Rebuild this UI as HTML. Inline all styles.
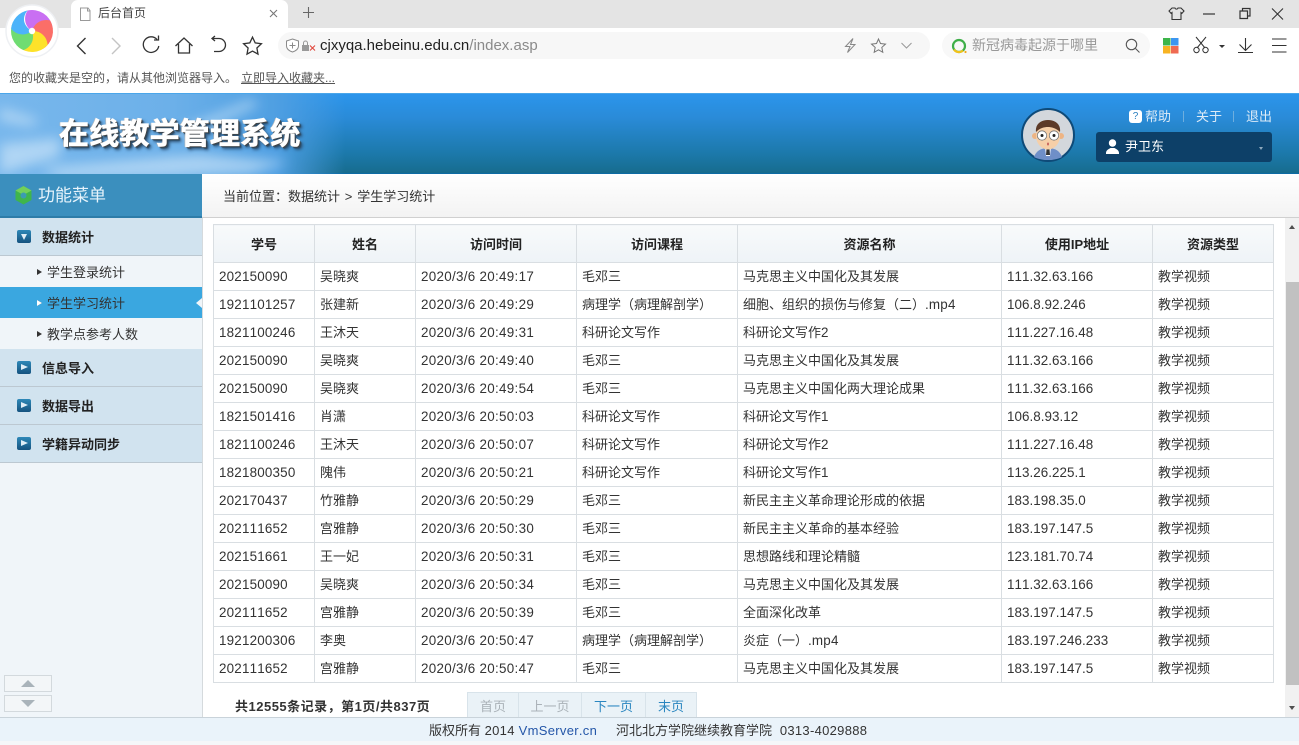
<!DOCTYPE html>
<html lang="zh"><head><meta charset="utf-8"><title>后台首页</title>
<style>
*{box-sizing:border-box;margin:0;padding:0}
html,body{width:1299px;height:745px;overflow:hidden;background:#fff}
body{position:relative;font-family:"Liberation Sans","Noto Sans CJK SC",sans-serif;font-size:13px;color:#333;font-kerning:none}
.a{position:absolute;white-space:nowrap}
svg{position:absolute;overflow:visible}
.i{fill:none;stroke:#333;stroke-width:1.3}
table{position:absolute;left:213px;top:224px;width:1060px;border-collapse:collapse;table-layout:fixed}
th,td{border:1px solid #d9dee2;white-space:nowrap;overflow:hidden}
th{height:38px;font-size:13px;font-weight:bold;color:#222;background:linear-gradient(#f8fafb,#eef3f7)}
td{height:28px;padding:0 0 0 5px;font-size:13px;color:#333;line-height:27px}
td i{font-style:normal;font-size:13.4px;letter-spacing:.2px}
td:nth-child(3) i{letter-spacing:.3px;word-spacing:0}
td:nth-child(6) i{letter-spacing:.05px}
.m1{left:0;width:202px;height:38px;background:#d1e3ef;border-bottom:1px solid #bcc8d1;font-weight:bold;font-size:13px;color:#222;line-height:39px;padding-left:42px}
.m1 b{position:absolute;left:17px;top:12px;width:14px;height:13px;border-radius:2px;background:linear-gradient(#2e88b8,#15537f)}
.m1 b:after{content:"";position:absolute;left:4px;top:3px;border-left:7px solid #dfeef7;border-top:3.5px solid transparent;border-bottom:3.5px solid transparent}
.m1 b.d:after{left:3.5px;top:4px;border-left:3.5px solid transparent;border-right:3.5px solid transparent;border-top:6px solid #dfeef7;border-bottom:0}
.m2{left:0;width:202px;height:31px;line-height:33px;padding-left:47px;font-size:13px;color:#333;background:#f0f5f9}
.m2:before{content:"";position:absolute;left:37px;top:13px;border-left:5px solid #333;border-top:3.5px solid transparent;border-bottom:3.5px solid transparent}
.pg{top:692px;height:25px;background:#eaf2f7;border:1px solid #d8e3ea;border-bottom:0;text-align:center;line-height:28px;font-size:13px}
.l{letter-spacing:.3px}
</style></head><body>

<!-- browser chrome -->
<div class="a" style="left:0;top:0;width:1299px;height:28px;background:#e4e4e4"></div>
<div class="a" style="left:71px;top:0;width:217px;height:28px;background:#fff;border-radius:7px 7px 0 0"></div>
<svg style="left:0;top:0" width="70" height="64" viewBox="0 0 70 64">
<circle cx="32" cy="31" r="26" fill="#fff" stroke="#eef0f3" stroke-width="1.5"/>
<g transform="translate(32 31)">
<path transform="rotate(-12)" d="M0 0C-6-6-6-15 0-21A21 21 0 0 1 21 0C12-6 5-5 0 0Z" fill="#c96ff2"/>
<path transform="rotate(60)" d="M0 0C-6-6-6-15 0-21A21 21 0 0 1 21 0C12-6 5-5 0 0Z" fill="#fb6e68"/>
<path transform="rotate(132)" d="M0 0C-6-6-6-15 0-21A21 21 0 0 1 21 0C12-6 5-5 0 0Z" fill="#fde22a"/>
<path transform="rotate(204)" d="M0 0C-6-6-6-15 0-21A21 21 0 0 1 21 0C12-6 5-5 0 0Z" fill="#6fdc72"/>
<path transform="rotate(276)" d="M0 0C-6-6-6-15 0-21A21 21 0 0 1 20-6.500C12-12 4-9 0 0Z" fill="#4cb3fa"/>
<circle r="3.200" fill="#fff"/>
</g>
</svg>
<svg style="left:79px;top:7px" width="12" height="14" viewBox="0 0 12 14"><path d="M1.500 1h7.500l2 2.500V13.500H1.500Z M8.500 1v3h2.500" fill="none" stroke="#999" stroke-width="1"/></svg>
<div class="a" style="left:98px;top:5px;font-size:12px;color:#444;line-height:17px">后台首页</div>
<svg style="left:269px;top:9px" width="9" height="9"><path d="M1 1l7 7M8 1l-7 7" stroke="#777" stroke-width="1.100" fill="none"/></svg>
<svg style="left:302px;top:6px" width="13" height="13"><path d="M6.500 1v11M1 6.500h11" stroke="#666" stroke-width="1.100" fill="none"/></svg>

<svg style="left:0;top:0;pointer-events:none" width="1299" height="62">
<g class="i">
<path d="M85.500 38l-8 8 8 8" stroke-width="1.400"/>
<path d="M112 38l8 8-8 8" stroke="#c4c4c4" stroke-width="1.400"/>
<path d="M157 39.500a7.800 7.800 0 1 0 1.800 6.500"/><path d="M154 40l4.500 0V35.500"/>
<path d="M175.500 46L184 38l8.500 8M178.500 44v9h11v-9"/>
<path d="M215 36l-3 2.500 3 2.500M212 38.500h7a6.500 6.500 0 0 1 0 13h-5"/>
<path d="M252.500 37.200l2.700 5.700 6.200.8-4.500 4.300 1.100 6.100-5.500-3-5.500 3 1.100-6.100-4.500-4.300 6.200-.8z"/>
</g>
</svg>

<div class="a" style="left:278px;top:32px;width:652px;height:27px;border-radius:13.500px;background:#f7f7f7"></div>
<svg style="left:285px;top:38px" width="34" height="15">
<path d="M7.500 1l6 2v5c0 3-3 5-6 6-3-1-6-3-6-6V3z" fill="#fff" stroke="#8a8a8a" stroke-width="1"/><path d="M7.500 4.500v6M4.500 7.500h6" stroke="#8a8a8a"/>
<rect x="17" y="7" width="7" height="6" fill="#999"/><path d="M18.500 7V5a2 2 0 0 1 4 0v2" fill="none" stroke="#999"/>
<path d="M25 7.500l5 5M30 7.500l-5 5" stroke="#e0483e" stroke-width="1.100"/></svg>
<div class="a" style="left:320px;top:36px;font-size:15px;line-height:19px;color:#222">cjxyqa.hebeinu.edu.cn<span style="color:#8a8a8a">/index.asp</span></div>
<svg style="left:842px;top:37px" width="75" height="18" class="i">
<path d="M11 1.500L3.500 9.500H8L5.500 15.500L13 7.500H8.500Z" stroke="#888" stroke-width="1" fill="none"/>
<path d="M36.500 2l2 4.500 5 .6-3.700 3.300 1 4.900-4.300-2.500-4.300 2.500 1-4.900-3.700-3.300 5-.6z" stroke="#777" fill="none" stroke-width="1"/>
<path d="M59.500 6l5 5 5-5" stroke="#999" fill="none" stroke-width="1"/></svg>

<div class="a" style="left:942px;top:32px;width:208px;height:27px;border-radius:13.500px;background:#f8f8f8"></div>
<svg style="left:951px;top:38px" width="17" height="16"><circle cx="8" cy="8" r="6" fill="none" stroke="#3fae49" stroke-width="2.200"/><path d="M3 11.500A6 6 0 0 0 12 12.500" fill="none" stroke="#f1c21a" stroke-width="2.200"/><circle cx="14.500" cy="14" r="1.100" fill="#f1a91a"/></svg>
<div class="a" style="left:972px;top:36px;font-size:14px;line-height:19px;color:#999">新冠病毒起源于哪里</div>
<svg style="left:1125px;top:38px" width="16" height="16"><circle cx="6.500" cy="6.500" r="5.200" fill="none" stroke="#555" stroke-width="1.100"/><path d="M10.500 10.500l4 4" stroke="#555" stroke-width="1.100"/></svg>
<svg style="left:1163px;top:38px" width="16" height="16"><rect width="7.500" height="7.500" fill="#3cb54a"/><rect x="8" width="7.500" height="7.500" fill="#3c96f0"/><rect y="8" width="7.500" height="7.500" fill="#f7b322"/><rect x="8" y="8" width="7.500" height="7.500" fill="#ef6a52"/></svg>
<svg style="left:1193px;top:36px" width="36" height="18" class="i"><path d="M3 1l9 11M13 1L4 12" stroke="#333" stroke-width="1" fill="none"/><circle cx="3.500" cy="14" r="2.700" stroke="#333" stroke-width="1" fill="none"/><circle cx="12.500" cy="14" r="2.700" stroke="#333" stroke-width="1" fill="none"/><path d="M26 9h6l-3 3z" fill="#333" stroke="none"/></svg>
<svg style="left:1237px;top:37px" width="17" height="17"><path d="M8.500 1v12M2.500 7.500l6 6 6-6M1 15.500h15" fill="none" stroke="#333" stroke-width="1.100"/></svg>
<svg style="left:1272px;top:38px" width="15" height="15"><path d="M0 1h14.500M0 7.500h14.500M0 14h14.500" stroke="#333" stroke-width="1.100"/></svg>

<svg style="left:1168px;top:6px" width="122" height="16">
<path d="M4 2l3 0c.5 1.500 2.500 1.500 3 0h3l3 3-2 2.300-1-.8V13.500H4V6.500l-1 .8-2-2.300z" fill="none" stroke="#333" stroke-width="1.100"/>
<path d="M35 8h12" stroke="#333" stroke-width="1.200"/>
<path d="M72 5h7.500v7.500H72zM74.500 5V2.500h7.500V10h-2.500" fill="none" stroke="#333" stroke-width="1.200"/>
<path d="M104 2.500l11 11M115 2.500l-11 11" stroke="#333" stroke-width="1.100"/></svg>

<div class="a" style="left:9px;top:70px;font-size:12px;line-height:16px;color:#555">您的收藏夹是空的，请从其他浏览器导入。</div>
<div class="a" style="left:241px;top:70px;font-size:12px;line-height:16px;color:#555;text-decoration:underline">立即导入收藏夹...</div>

<!-- app header -->
<div class="a" style="left:0;top:93px;width:1299px;height:81px;background:linear-gradient(#2b95ec 0%,#2a8bd8 30%,#1c79ab 75%,#176c8e 100%);border-top:1px solid #4aa6ea;border-bottom:1px solid #0d6ba4"></div>
<div class="a" style="left:0;top:94px;width:345px;height:80px;background:linear-gradient(90deg,#78b7ec 0%,#6cb0e9 50%,#4f9fe2 80%,rgba(43,140,218,0) 100%)"></div>
<svg style="left:0;top:94px;width:340px;height:80px;overflow:hidden" width="340" height="80"><defs><filter id="b" x="-30%" y="-30%" width="160%" height="160%"><feGaussianBlur stdDeviation="6"/></filter></defs><g filter="url(#b)" fill="#d6eafa" opacity=".6"><path d="M0 14L40 26 30 32 0 26Z"/><path d="M170 40L250 6 260 10 190 42Z"/><path d="M0 50L60 44 60 62 0 80Z"/><path d="M40 74L200 60 290 68 250 80 60 84Z"/></g></svg>
<div class="a" style="left:59px;top:115px;font-size:30px;line-height:40px;font-weight:bold;letter-spacing:.2px;color:#fff;-webkit-text-stroke:.6px #fff;text-shadow:1px 1px 0 #444,2px 2px 1px #2c4a63,3px 3px 3px #29496a,-1px 0 0 #bbb">在线教学管理系统</div>

<svg style="left:1021px;top:108px" width="54" height="54" viewBox="0 0 54 54">
<circle cx="27" cy="27" r="26" fill="#d3d7dc" stroke="#0e4a78" stroke-width="2"/>
<path d="M13 49c2-6 7-9 14-9s12 3 14 9c-8 4-20 4-28 0z" fill="#6f8fc8"/>
<path d="M24 39h6l-1 9h-4z" fill="#fff"/><path d="M25.500 41h3l.5 6h-4z" fill="#333"/>
<circle cx="14" cy="28" r="3" fill="#eeb483"/><circle cx="40" cy="28" r="3" fill="#eeb483"/>
<ellipse cx="27" cy="28" rx="12" ry="13.500" fill="#f6cfa8"/>
<path d="M15 24c-1-8 5-12 12-12 7 0 13 4 12 12-4-4-9-5-12-5-4 0-8 1-12 5z" fill="#5d3a28"/>
<circle cx="21" cy="27.500" r="4.700" fill="#fff" stroke="#777" stroke-width=".8"/><circle cx="33" cy="27.500" r="4.700" fill="#fff" stroke="#777" stroke-width=".8"/>
<circle cx="21" cy="27.500" r="1.500" fill="#222"/><circle cx="33" cy="27.500" r="1.500" fill="#222"/>
<ellipse cx="27" cy="36" rx="1" ry="1.500" fill="#c9655e"/>
</svg>

<div class="a" style="left:1129px;top:110px;width:13px;height:13px;border-radius:3px;background:#fff;color:#2a80c0;font-size:10px;line-height:13px;text-align:center">?</div>
<div class="a" style="left:1145px;top:109px;font-size:13px;line-height:16px;color:#dcebf7">帮助</div>
<div class="a" style="left:1183px;top:111px;width:1px;height:11px;background:#6eaede"></div>
<div class="a" style="left:1196px;top:109px;font-size:13px;line-height:16px;color:#dcebf7">关于</div>
<div class="a" style="left:1233px;top:111px;width:1px;height:11px;background:#6eaede"></div>
<div class="a" style="left:1246px;top:109px;font-size:13px;line-height:16px;color:#dcebf7">退出</div>
<div class="a" style="left:1096px;top:132px;width:176px;height:30px;border-radius:3px;background:#0d4068"></div>
<svg style="left:1106px;top:139px" width="13" height="15"><circle cx="6.500" cy="4" r="3.700" fill="#fff"/><path d="M0 14c0-3 3-4 4.500-5h4c1.500 1 4.500 2 4.500 5v1H0z" fill="#fff"/></svg>
<div class="a" style="left:1125px;top:138px;font-size:13px;line-height:18px;color:#fff">尹卫东</div>
<div class="a" style="left:1259px;top:147px;border-top:3px solid #8fa9bd;border-left:2.500px solid transparent;border-right:2.500px solid transparent"></div>

<!-- breadcrumb -->
<div class="a" style="left:202px;top:174px;width:1097px;height:44px;background:linear-gradient(#fff,#f3f3f3);border-bottom:1px solid #d0d0d0"></div>
<div class="a" style="left:223px;top:188px;font-size:13px;line-height:18px;color:#333;word-spacing:1.200px">当前位置：数据统计 &gt; 学生学习统计</div>

<!-- sidebar -->
<div class="a" style="left:0;top:174px;width:202px;height:543px;background:#f0f5f9"></div>
<div class="a" style="left:0;top:174px;width:202px;height:44px;background:#3b8fbe;border-bottom:2px solid #2d7ca8"></div>
<svg style="left:15px;top:186px" width="18" height="19"><path d="M8.500 0l8 4.500v9.500l-8 4.500-8-4.500V4.500z" fill="#3fb54c"/><path d="M8.500 0l8 4.500-8 4.500-8-4.500z" fill="#72d05a"/><circle cx="8.500" cy="9.500" r="3" fill="#3b9cb0"/></svg>
<div class="a" style="left:38px;top:184px;font-size:17px;line-height:23px;color:#e6f3fb">功能菜单</div>

<div class="a m1" style="top:218px"><b class="d"></b>数据统计</div>
<div class="a m2" style="top:256px">学生登录统计</div>
<div class="a m2" style="top:287px;background:#3aa7e0"><span>学生学习统计</span></div>
<div class="a" style="left:37px;top:300px;border-left:5px solid #fff;border-top:3.500px solid transparent;border-bottom:3.500px solid transparent"></div>
<div class="a" style="left:196px;top:298px;border-right:6px solid #f0f5f9;border-top:5px solid transparent;border-bottom:5px solid transparent"></div>
<div class="a m2" style="top:318px">教学点参考人数</div>
<div class="a m1" style="top:349px"><b></b>信息导入</div>
<div class="a m1" style="top:387px"><b></b>数据导出</div>
<div class="a m1" style="top:425px"><b></b>学籍异动同步</div>

<div class="a" style="left:4px;top:675px;width:48px;height:17px;background:#f3f6f8;border:1px solid #d3d9dd"></div>
<div class="a" style="left:21px;top:680px;border-bottom:7px solid #a9b3ba;border-left:7px solid transparent;border-right:7px solid transparent"></div>
<div class="a" style="left:4px;top:695px;width:48px;height:17px;background:#f3f6f8;border:1px solid #d3d9dd"></div>
<div class="a" style="left:21px;top:700px;border-top:7px solid #a9b3ba;border-left:7px solid transparent;border-right:7px solid transparent"></div>

<div class="a" style="left:202px;top:218px;width:1px;height:499px;background:#d5dadd"></div>

<!-- table -->
<table>
<colgroup><col style="width:101px"><col style="width:101px"><col style="width:161px"><col style="width:161px"><col style="width:264px"><col style="width:151px"><col style="width:121px"></colgroup>
<tr><th>学号</th><th>姓名</th><th>访问时间</th><th>访问课程</th><th>资源名称</th><th>使用IP地址</th><th>资源类型</th></tr>
<tr><td><i>202150090</i></td><td>吴晓爽</td><td><i>2020/3/6 20:49:17</i></td><td>毛邓三</td><td>马克思主义中国化及其发展</td><td><i>111.32.63.166</i></td><td>教学视频</td></tr>
<tr><td><i>1921101257</i></td><td>张建新</td><td><i>2020/3/6 20:49:29</i></td><td>病理学（病理解剖学）</td><td>细胞、组织的损伤与修复（二）<i>.mp4</i></td><td><i>106.8.92.246</i></td><td>教学视频</td></tr>
<tr><td><i>1821100246</i></td><td>王沐天</td><td><i>2020/3/6 20:49:31</i></td><td>科研论文写作</td><td>科研论文写作<i>2</i></td><td><i>111.227.16.48</i></td><td>教学视频</td></tr>
<tr><td><i>202150090</i></td><td>吴晓爽</td><td><i>2020/3/6 20:49:40</i></td><td>毛邓三</td><td>马克思主义中国化及其发展</td><td><i>111.32.63.166</i></td><td>教学视频</td></tr>
<tr><td><i>202150090</i></td><td>吴晓爽</td><td><i>2020/3/6 20:49:54</i></td><td>毛邓三</td><td>马克思主义中国化两大理论成果</td><td><i>111.32.63.166</i></td><td>教学视频</td></tr>
<tr><td><i>1821501416</i></td><td>肖潇</td><td><i>2020/3/6 20:50:03</i></td><td>科研论文写作</td><td>科研论文写作<i>1</i></td><td><i>106.8.93.12</i></td><td>教学视频</td></tr>
<tr><td><i>1821100246</i></td><td>王沐天</td><td><i>2020/3/6 20:50:07</i></td><td>科研论文写作</td><td>科研论文写作<i>2</i></td><td><i>111.227.16.48</i></td><td>教学视频</td></tr>
<tr><td><i>1821800350</i></td><td>隗伟</td><td><i>2020/3/6 20:50:21</i></td><td>科研论文写作</td><td>科研论文写作<i>1</i></td><td><i>113.26.225.1</i></td><td>教学视频</td></tr>
<tr><td><i>202170437</i></td><td>竹雅静</td><td><i>2020/3/6 20:50:29</i></td><td>毛邓三</td><td>新民主主义革命理论形成的依据</td><td><i>183.198.35.0</i></td><td>教学视频</td></tr>
<tr><td><i>202111652</i></td><td>宫雅静</td><td><i>2020/3/6 20:50:30</i></td><td>毛邓三</td><td>新民主主义革命的基本经验</td><td><i>183.197.147.5</i></td><td>教学视频</td></tr>
<tr><td><i>202151661</i></td><td>王一妃</td><td><i>2020/3/6 20:50:31</i></td><td>毛邓三</td><td>思想路线和理论精髓</td><td><i>123.181.70.74</i></td><td>教学视频</td></tr>
<tr><td><i>202150090</i></td><td>吴晓爽</td><td><i>2020/3/6 20:50:34</i></td><td>毛邓三</td><td>马克思主义中国化及其发展</td><td><i>111.32.63.166</i></td><td>教学视频</td></tr>
<tr><td><i>202111652</i></td><td>宫雅静</td><td><i>2020/3/6 20:50:39</i></td><td>毛邓三</td><td>全面深化改革</td><td><i>183.197.147.5</i></td><td>教学视频</td></tr>
<tr><td><i>1921200306</i></td><td>李奥</td><td><i>2020/3/6 20:50:47</i></td><td>病理学（病理解剖学）</td><td>炎症（一）<i>.mp4</i></td><td><i>183.197.246.233</i></td><td>教学视频</td></tr>
<tr><td><i>202111652</i></td><td>宫雅静</td><td><i>2020/3/6 20:50:47</i></td><td>毛邓三</td><td>马克思主义中国化及其发展</td><td><i>183.197.147.5</i></td><td>教学视频</td></tr>
</table>

<!-- pager -->
<div class="a" style="left:235px;top:698px;font-size:13px;line-height:18px;font-weight:bold;color:#333;letter-spacing:.5px">共12555条记录，第1页/共837页</div>
<div class="a pg" style="left:467px;width:52px;color:#aab2b8">首页</div>
<div class="a pg" style="left:518px;width:64px;color:#aab2b8">上一页</div>
<div class="a pg" style="left:581px;width:65px;color:#2a86c0">下一页</div>
<div class="a pg" style="left:645px;width:52px;color:#2a86c0">末页</div>

<!-- scrollbar -->
<div class="a" style="left:1285px;top:218px;width:14px;height:499px;background:#f1f1f1"></div>
<div class="a" style="left:1286px;top:282px;width:13px;height:403px;background:#c1c1c1"></div>
<div class="a" style="left:1289px;top:225px;border-bottom:4px solid #505050;border-left:3.500px solid transparent;border-right:3.500px solid transparent"></div>
<div class="a" style="left:1289px;top:706px;border-top:4px solid #505050;border-left:3.500px solid transparent;border-right:3.500px solid transparent"></div>

<!-- footer -->
<div class="a" style="left:0;top:717px;width:1299px;height:28px;background:linear-gradient(#eaf3fa 0,#eaf3fa 85%,#f5f7f9 85%);border-top:1px solid #c9d3da"></div>
<div class="a" style="left:429px;top:722px;font-size:13px;line-height:17px;color:#333">版权所有 <span class="l">2014 </span><span class="l" style="color:#2456a8">VmServer.cn</span></div>
<div class="a" style="left:616px;top:722px;font-size:13px;line-height:17px;color:#333">河北北方学院继续教育学院<span class="l">&nbsp; 0313-4029888</span></div>
</body></html>
